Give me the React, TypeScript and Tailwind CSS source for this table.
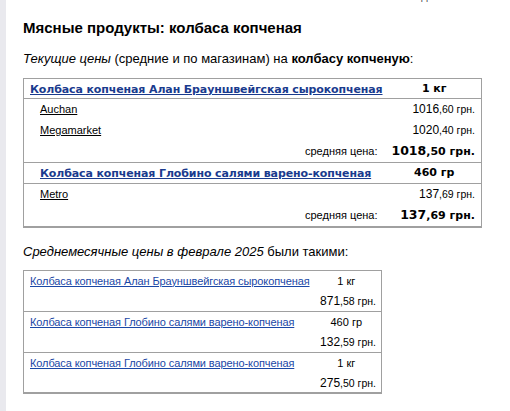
import React from "react";

const arial = { fontFamily: '"Liberation Sans", Arial, sans-serif' };
const verdana = { fontFamily: '"DejaVu Sans", Verdana, sans-serif' };

type Shop = { name: string; whole: string; cents: string };

const current: { title: string; weight: string; shops: Shop[]; avgWhole: string; avgCents: string }[] = [
  {
    title: "Колбаса копченая Алан Брауншвейгская сырокопченая",
    weight: "1 кг",
    shops: [
      { name: "Auchan", whole: "1016", cents: ",60" },
      { name: "Megamarket", whole: "1020", cents: ",40" },
    ],
    avgWhole: "1018",
    avgCents: ",50",
  },
  {
    title: "Колбаса копченая Глобино салями варено-копченая",
    weight: "460 гр",
    shops: [{ name: "Metro", whole: "137", cents: ",69" }],
    avgWhole: "137",
    avgCents: ",69",
  },
];

const monthly = [
  { title: "Колбаса копченая Алан Брауншвейгская сырокопченая", weight: "1 кг", whole: "871", cents: ",58" },
  { title: "Колбаса копченая Глобино салями варено-копченая", weight: "460 гр", whole: "132", cents: ",59" },
  { title: "Колбаса копченая Глобино салями варено-копченая", weight: "1 кг", whole: "275", cents: ",50" },
];

export default function App() {
  return (
    <div className="flex w-[510px] h-[411px] overflow-hidden bg-white text-black" style={arial}>
      <div className="w-[6px] shrink-0 bg-[#e9e9ee]" />
      <div className="flex-1 pl-[17px]">
        <div className="h-[4px] overflow-hidden text-right">
          <div className="-mt-[10px] text-[11px] leading-[13px] text-[#555]">последнее обновление</div>
        </div>

        <h1 className="mt-[15px] text-[15px] font-bold leading-[18px]">Мясные продукты: колбаса копченая</h1>

        <p className="mt-[14px] text-[13px] leading-[16px]">
          <i>Текущие цены</i> (средние и по магазинам) на <b>колбасу копченую</b>:
        </p>

        <table className="mt-[11px] w-[459px] table-fixed border border-b-2 border-[#a0a0a0] border-collapse leading-[14px]">
          <colgroup>
            <col />
            <col className="w-[94px]" />
          </colgroup>
          <tbody>
            {current.map((item, i) => (
              <React.Fragment key={i}>
                <tr className={`border-b border-[#a0a0a0] ${i > 0 ? "border-t" : ""}`}>
                  <td className={`${i === 0 ? "h-[20px] pl-[6px]" : "h-[21px] pl-[16px]"} p-0 text-left whitespace-nowrap`}>
                    <a
                      href="#"
                      className="text-[11px] font-bold tracking-[-0.12px] text-[#1a3b8e] underline"
                      style={verdana}
                    >
                      {item.title}
                    </a>
                  </td>
                  <td className="p-0 text-center text-[11px] font-bold whitespace-nowrap" style={verdana}>
                    {item.weight}
                  </td>
                </tr>
                {item.shops.map((s) => (
                  <tr key={s.name}>
                    <td className="h-[21px] p-0 pl-[16px] text-[11px]">
                      <a href="#" className="text-black underline">
                        {s.name}
                      </a>
                    </td>
                    <td className="p-0 pr-[6px] text-right text-[12px] whitespace-nowrap">
                      {s.whole}
                      <span className="text-[10.5px]">{s.cents} грн.</span>
                    </td>
                  </tr>
                ))}
                <tr>
                  <td className="h-[22px] p-0 pr-[10px] text-right text-[11px]">средняя цена:</td>
                  <td className="p-0 pr-[6px] text-right font-bold text-[12.5px] whitespace-nowrap" style={verdana}>
                    {item.avgWhole}
                    <span className="text-[11px]">{item.avgCents} грн.</span>
                  </td>
                </tr>
              </React.Fragment>
            ))}
          </tbody>
        </table>

        <p className="mt-[16px] text-[13px] leading-[16px]">
          <i>Среднемесячные цены в феврале 2025</i> были такими:
        </p>

        <table className="mt-[10px] w-[359px] table-fixed border border-b-2 border-[#a0a0a0] border-collapse leading-[14px]">
          <colgroup>
            <col />
            <col className="w-[68px]" />
          </colgroup>
          <tbody>
            {monthly.map((m, i) => (
              <React.Fragment key={i}>
                <tr className={i > 0 ? "border-t border-[#a0a0a0]" : ""}>
                  <td className="h-[21px] p-0 pl-[6px] text-[11px] tracking-[-0.1px] whitespace-nowrap">
                    <a href="#" className="text-[#1a47a6] underline">
                      {m.title}
                    </a>
                  </td>
                  <td className="p-0 pr-[2px] text-center text-[11px] whitespace-nowrap">{m.weight}</td>
                </tr>
                <tr>
                  <td className="h-[20px] p-0" />
                  <td className="p-0 pr-[5px] text-right text-[12px] whitespace-nowrap">
                    {m.whole}
                    <span className="text-[10.5px]">{m.cents} грн.</span>
                  </td>
                </tr>
              </React.Fragment>
            ))}
          </tbody>
        </table>
      </div>
    </div>
  );
}
